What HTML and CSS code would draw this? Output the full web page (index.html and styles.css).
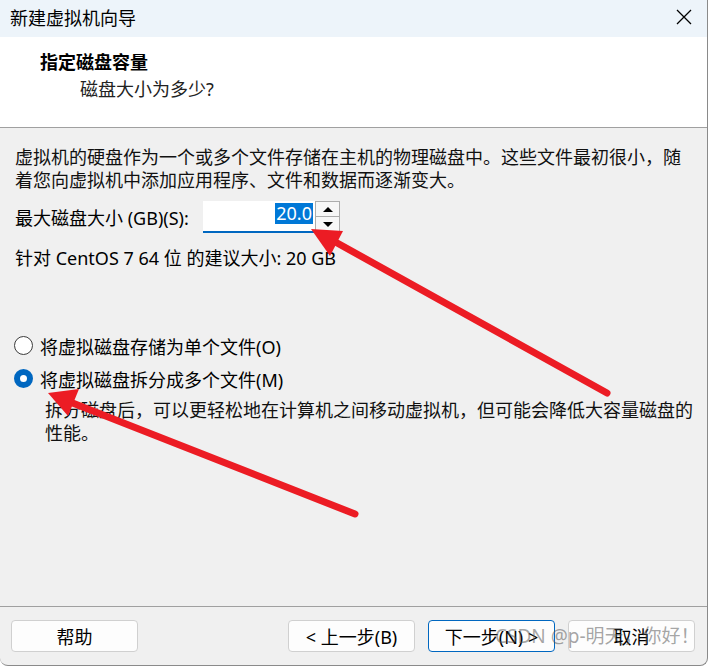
FILE: index.html
```html
<!DOCTYPE html>
<html>
<head>
    <meta charset="utf-8">
    <link rel="stylesheet" href="styles.css">
</head>
<body>
    <div class="window">
        <div class="titlebar">
            <span class="title">新建虚拟机向导</span>
            <svg class="close" width="16" height="16" viewBox="0 0 16 16">
                <path d="M1 1 L15 15 M15 1 L1 15" stroke="#000" stroke-width="1.3" fill="none"/>
            </svg>
        </div>

        <div class="header">
            <div class="header-title">指定磁盘容量</div>
            <div class="header-sub">磁盘大小为多少?</div>
        </div>

        <div class="content">
            <p class="intro">虚拟机的硬盘作为一个或多个文件存储在主机的物理磁盘中。这些文件最初很小，随着您向虚拟机中添加应用程序、文件和数据而逐渐变大。</p>

            <div class="size-row">
                <span class="size-label">最大磁盘大小 (GB)(S):</span>
                <div class="spinbox">
                    <div class="spin-input"><span class="selected">20.0</span></div>
                    <div class="spin-buttons">
                        <div class="spin-btn"><span class="tri-up"></span></div>
                        <div class="spin-btn"><span class="tri-down"></span></div>
                    </div>
                </div>
            </div>

            <div class="recommend">针对 CentOS 7 64 位 的建议大小: 20 GB</div>

            <div class="options">
                <label class="radio-row">
                    <span class="radio"></span>
                    <span>将虚拟磁盘存储为单个文件(O)</span>
                </label>
                <label class="radio-row">
                    <span class="radio checked"></span>
                    <span>将虚拟磁盘拆分成多个文件(M)</span>
                </label>
                <p class="option-desc">拆分磁盘后，可以更轻松地在计算机之间移动虚拟机，但可能会降低大容量磁盘的性能。</p>
            </div>
        </div>

        <div class="footer">
            <button class="btn btn-help">帮助</button>
            <div class="nav-buttons">
                <button class="btn">&lt; 上一步(B)</button>
                <button class="btn btn-default">下一步(N) &gt;</button>
                <button class="btn">取消</button>
            </div>
        </div>
    </div>

    <!-- annotation arrows drawn on top of the dialog -->
    <svg class="arrows" width="710" height="666" viewBox="0 0 710 666">
        <line x1="607" y1="393" x2="330" y2="239" stroke="#ec1c24" stroke-width="7" stroke-linecap="round"/>
        <polygon points="311,229 343,231 330,256" fill="#ec1c24"/>
        <line x1="355" y1="514" x2="70" y2="402" stroke="#ec1c24" stroke-width="7" stroke-linecap="round"/>
        <polygon points="48,393 79,389 68,416" fill="#ec1c24"/>
    </svg>

    <div class="watermark">CSDN @p-明天，你好！</div>
</body>
</html>
```

FILE: styles.css
```css
html, body {
    margin: 0;
    padding: 0;
    background: #ffffff;
}

body {
    width: 710px;
    height: 666px;
    position: relative;
    overflow: hidden;
    font-family: "Noto Sans", "Noto Sans CJK SC", sans-serif;
    font-size: 18px;
    color: #000;
}

.window {
    width: 707px;
    height: 665px;
    display: flex;
    flex-direction: column;
    background: #f0f0f0;
    border-right: 1px solid #8a8a8a;
    border-bottom: 1px solid #8a8a8a;
    border-radius: 0 0 8px 8px;
    overflow: hidden;
}

.titlebar {
    height: 37px;
    flex: none;
    background: #edf4fa;
    display: flex;
    align-items: center;
    justify-content: space-between;
    padding: 0 15px 4px 10px;
    box-sizing: border-box;
}

.title {
    font-family: "Noto Sans CJK SC", sans-serif;
    font-size: 18px;
    line-height: 24px;
}

.header {
    height: 91px;
    flex: none;
    box-sizing: border-box;
    background: #ffffff;
    border-bottom: 1px solid #a0a0a0;
    padding: 12px 0 0 40px;
}

.header-title {
    font-family: "Noto Sans CJK SC", serif;
    font-weight: bold;
    font-size: 18px;
    line-height: 24px;
}

.header-sub {
    margin: 4px 0 0 40px;
    font-size: 18px;
    line-height: 24px;
    color: #222;
}

.content {
    flex: 1;
    padding: 18px 15px 0 15px;
    border-bottom: 1px solid #a0a0a0;
}

.intro {
    margin: 0;
    line-height: 23px;
    color: #111;
}

.size-row {
    display: flex;
    align-items: center;
    margin-top: 9px;
    height: 32px;
}

.size-label {
    width: 188px;
}

.spinbox {
    display: flex;
    height: 32px;
}

.spin-input {
    width: 112px;
    box-sizing: border-box;
    background: #ffffff;
    border-bottom: 2px solid #0067c0;
    display: flex;
    justify-content: flex-end;
    align-items: flex-start;
    padding: 2px 2px 0 0;
}

.selected {
    background: #0078d7;
    color: #ffffff;
    line-height: 21px;
    padding: 0 1px;
}

.spin-buttons {
    display: flex;
    flex-direction: column;
    width: 25px;
    height: 31px;
}

.spin-btn {
    flex: 1;
    border: 1px solid #adadad;
    background: #f7f7f7;
    display: flex;
    align-items: center;
    justify-content: center;
}

.spin-btn + .spin-btn {
    border-top: none;
}

.tri-up {
    width: 0;
    height: 0;
    border-left: 5px solid transparent;
    border-right: 5px solid transparent;
    border-bottom: 5px solid #000;
}

.tri-down {
    width: 0;
    height: 0;
    border-left: 5px solid transparent;
    border-right: 5px solid transparent;
    border-top: 5px solid #000;
}

.recommend {
    margin-top: 14px;
    line-height: 23px;
}

.options {
    margin-top: 64px;
}

.radio-row {
    display: flex;
    align-items: center;
    height: 23px;
    margin-left: -1px;
    margin-bottom: 10px;
}

.radio {
    width: 17px;
    height: 17px;
    border: 1px solid #3c3c3c;
    border-radius: 50%;
    background: #ffffff;
    margin-right: 7px;
    box-sizing: content-box;
}

.radio.checked {
    width: 7px;
    height: 7px;
    border: 6px solid #0067c0;
}

.option-desc {
    margin: -1px -14px 0 30px;
    line-height: 23px;
    color: #111;
}

.footer {
    flex: none;
    height: 58px;
    box-sizing: border-box;
    display: flex;
    justify-content: space-between;
    padding: 13px 12px 0 11px;
}

.nav-buttons {
    display: flex;
    gap: 13px;
}

.btn {
    width: 127px;
    height: 32px;
    background: #fdfdfd;
    border: 1px solid #d0d0d0;
    border-radius: 4px;
    font-family: "Noto Sans", "Noto Sans CJK SC", sans-serif;
    font-size: 18px;
    color: #000;
    padding: 0;
}

.btn-default {
    border: 1px solid #0067c0;
}

.arrows {
    position: absolute;
    left: 0;
    top: 0;
    pointer-events: none;
}

.watermark {
    position: absolute;
    left: 495px;
    top: 623px;
    font-family: "Noto Sans", "Noto Sans CJK SC", sans-serif;
    font-size: 19px;
    line-height: 26px;
    color: rgba(90, 90, 90, 0.55);
    white-space: nowrap;
}
```
